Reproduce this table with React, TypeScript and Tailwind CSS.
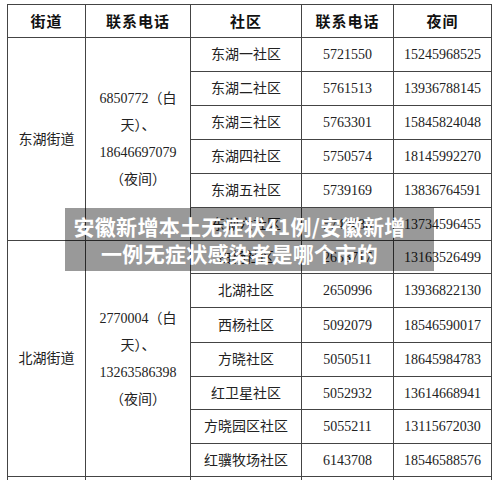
import React from "react";

type Row = { name: string; day: string; night: string; h: string };

const donghu: Row[] = [
  { name: "东湖一社区", day: "5721550", night: "15245968525", h: "h-[34px]" },
  { name: "东湖二社区", day: "5761513", night: "13936788145", h: "h-[34px]" },
  { name: "东湖三社区", day: "5763301", night: "15845824048", h: "h-[34px]" },
  { name: "东湖四社区", day: "5750574", night: "18145992270", h: "h-[34px]" },
  { name: "东湖五社区", day: "5739169", night: "13836764591", h: "h-[34px]" },
  { name: "东湖六社区", day: "5740486", night: "13734596455", h: "h-[33px]" },
];

const beihu: Row[] = [
  { name: "白杨社区", day: "2653717", night: "13163526499", h: "h-[33px]" },
  { name: "北湖社区", day: "2650996", night: "13936822130", h: "h-[34px]" },
  { name: "西杨社区", day: "5092079", night: "18546590017", h: "h-[35px]" },
  { name: "方晓社区", day: "5050511", night: "18645984783", h: "h-[34px]" },
  { name: "红卫星社区", day: "5052932", night: "13614668941", h: "h-[33px]" },
  { name: "方晓园区社区", day: "5055211", night: "13115672030", h: "h-[34px]" },
  { name: "红骥牧场社区", day: "6143708", night: "18546588576", h: "h-[33px]" },
];

const cell = "border border-[#444] text-center align-middle p-0";

function Section({ street, day, night, rows }: { street: string; day: string; night: string; rows: Row[] }) {
  return (
    <>
      {rows.map((r, i) => (
        <tr key={r.name} className={r.h}>
          {i === 0 && (
            <>
              <td rowSpan={rows.length} className={cell}>{street}</td>
              <td rowSpan={rows.length} className={`${cell} leading-[27px]`}>
                {day}（白
                <br />
                天）、
                <br />
                {night}
                <br />
                （夜间）
              </td>
            </>
          )}
          <td className={cell}>{r.name}</td>
          <td className={cell}>{r.day}</td>
          <td className={cell}>{r.night}</td>
        </tr>
      ))}
    </>
  );
}

export default function App() {
  return (
    <div className="relative w-[500px] h-[480px] overflow-hidden bg-white pt-[4px] pl-[7px]">
      <table className="table-fixed border-collapse text-[14px] text-[#222] font-['Liberation_Serif','Noto_Sans_CJK_SC',serif]">
        <colgroup>
          <col className="w-[78px]" />
          <col className="w-[105px]" />
          <col className="w-[111px]" />
          <col className="w-[92px]" />
          <col className="w-[98px]" />
        </colgroup>
        <thead>
          <tr className="h-[33px] font-['Noto_Sans_CJK_SC',sans-serif] font-bold text-[15px] tracking-[1px] text-[#111]">
            <th className={cell}>街道</th>
            <th className={cell}>联系电话</th>
            <th className={cell}>社区</th>
            <th className={cell}>联系电话</th>
            <th className={cell}>夜间</th>
          </tr>
        </thead>
        <tbody>
          <Section street="东湖街道" day="6850772" night="18646697079" rows={donghu} />
          <Section street="北湖街道" day="2770004" night="13263586398" rows={beihu} />
          <tr className="h-[34px]">
            <td className={cell}></td>
            <td className={cell}></td>
            <td className={cell}></td>
            <td className={cell}></td>
            <td className={cell}></td>
          </tr>
        </tbody>
      </table>

      <div className="absolute left-[65px] top-[208px] w-[369px] h-[63px] pr-[20px] bg-black/40 flex flex-col items-center justify-center text-white font-bold text-[21px] leading-[27px] tracking-[0.3px] font-['Noto_Sans_CJK_SC',sans-serif]">
        <div>安徽新增本土无症状41例/安徽新增</div>
        <div>一例无症状感染者是哪个市的</div>
      </div>
    </div>
  );
}
